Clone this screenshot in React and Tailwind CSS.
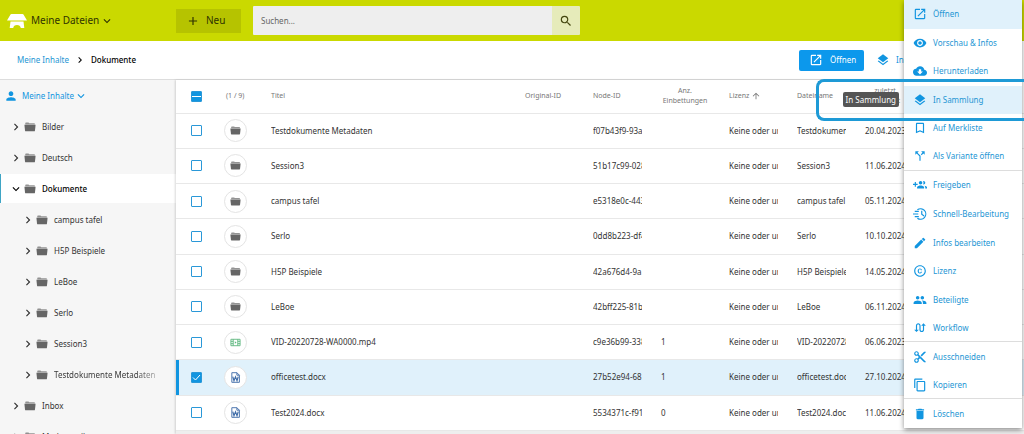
import React from 'react';
import {
  MdAdd,
  MdArrowUpward,
  MdBookmarkBorder,
  MdCallSplit,
  MdChevronRight,
  MdCloudDownload,
  MdContentCopy,
  MdContentCut,
  MdCopyright,
  MdDelete,
  MdEdit,
  MdExpandMore,
  MdLayers,
  MdOpenInNew,
  MdPeople,
  MdPerson,
  MdRemoveRedEye,
  MdSearch,
  MdSwapCalls,
} from 'react-icons/md';

const TREE = [
  { name: 'Bilder', level: 0 },
  { name: 'Deutsch', level: 0 },
  { name: 'Dokumente', level: 0, open: true },
  { name: 'campus tafel', level: 1 },
  { name: 'H5P Beispiele', level: 1 },
  { name: 'LeBoe', level: 1 },
  { name: 'Serlo', level: 1 },
  { name: 'Session3', level: 1 },
  { name: 'Testdokumente Metadaten', level: 1, fade: true },
  { name: 'Inbox', level: 0 },
  { name: 'Mathematik', level: 0 },
];

const ROWS = [
  { type: 'folder', title: 'Testdokumente Metadaten', node: 'f07b43f9-93a', date: '20.04.2023' },
  { type: 'folder', title: 'Session3', node: '51b17c99-028', date: '11.06.2024' },
  { type: 'folder', title: 'campus tafel', node: 'e5318e0c-443', date: '05.11.2024' },
  { type: 'folder', title: 'Serlo', node: '0dd8b223-df4', date: '10.10.2024' },
  { type: 'folder', title: 'H5P Beispiele', node: '42a676d4-9a', date: '14.05.2024' },
  { type: 'folder', title: 'LeBoe', node: '42bff225-81b', date: '06.11.2024' },
  { type: 'video', title: 'VID-20220728-WA0000.mp4', node: 'c9e36b99-338', count: 1, date: '06.06.2023' },
  { type: 'word', title: 'officetest.docx', node: '27b52e94-68', count: 1, date: '27.10.2024', selected: true },
  { type: 'word', title: 'Test2024.docx', node: '5534371c-f91', count: 0, date: '11.06.2024' },
];

// Group with the plus sign on the left
const ShareIcon = ({ className }) => (
  <svg viewBox="0 0 24 24" fill="currentColor" className={className}>
    <path d="M8 10H5V7H3v3H0v2h3v3h2v-3h3v-2zm10 1c1.66 0 2.99-1.34 2.99-3S19.66 5 18 5c-.32 0-.63.05-.91.14.57.81.9 1.79.9 2.86s-.34 2.04-.9 2.86c.28.09.59.14.91.14zm-5 0c1.66 0 2.99-1.34 2.99-3S14.66 5 13 5c-1.66 0-3 1.34-3 3s1.34 3 3 3zm6.62 2.16c.83.73 1.38 1.66 1.38 2.84v2h3v-2c0-1.54-2.37-2.49-4.38-2.84zM13 13c-2 0-6 1-6 3v2h12v-2c0-2-4-3-6-3z" />
  </svg>
);

// Clock with speed lines
const QuickEditIcon = ({ className }) => (
  <svg viewBox="0 0 24 24" fill="none" stroke="currentColor" strokeWidth="2" className={className}>
    <path d="M7.500 4.800A9 9 0 1 1 7.500 19.200" />
    <path d="M15 6.500v6l4 3M3 7.500h7M0 12h9M3 16.500h7" />
  </svg>
);

const FolderIcon = ({ className }) => (
  <svg viewBox="0 0 24 24" fill="#666" className={className}>
    <path d="M2.500 4.500c0-1 .6-1.500 1.500-1.500h5l1.500 1.500h10c.8 0 1.300.5 1.300 1.300V7H2.500z" opacity=".7" />
    <path d="M.8 7.500h22.400l-1.300 12c-.1.700-.6 1-1.300 1H3.400c-.7 0-1.200-.3-1.300-1z" />
  </svg>
);

const VideoIcon = ({ className }) => (
  <svg viewBox="0 0 24 24" fill="none" stroke="#5fb880" strokeWidth="2" className={className}>
    <path d="M2 5h20v14H2zM7 5v14M17 5v14M2 9.500h5M2 14.500h5M17 9.500h5M17 14.500h5" />
    <path d="M10.500 9.500v5l4-2.500z" fill="#5fb880" stroke="none" />
  </svg>
);

const WordIcon = ({ className }) => (
  <svg viewBox="0 0 24 24" fill="none" stroke="#3f6ca8" strokeWidth="2" className={className}>
    <path d="M4 1.500h11l5.500 5.500v15.500H4zM15 1.500V7h5.500" />
    <path d="M6 10l2.700 9L12 10.500l3.300 8.500L18 10" strokeWidth="2.600" />
  </svg>
);

const Logo = ({ className }) => (
  <svg viewBox="0 0 20 16" fill="#fff" className={className}>
    <path d="M4.500 1h11c.5 0 .8.200 1 .6L20 7.500H0l3.500-5.900c.2-.4.500-.6 1-.6z" />
    <path d="M3.500 8.500h13l.8 6.500h-3.500c-.3-2-1.600-3-3.800-3s-3.500 1-3.800 3H2.700z" />
  </svg>
);

const MENU = [
  { label: 'Öffnen', icon: MdOpenInNew, active: true },
  { label: 'Vorschau & Infos', icon: MdRemoveRedEye },
  { label: 'Herunterladen', icon: MdCloudDownload },
  { label: 'In Sammlung', icon: MdLayers, active: true },
  { label: 'Auf Merkliste', icon: MdBookmarkBorder },
  { label: 'Als Variante öffnen', icon: MdCallSplit, divider: true },
  { label: 'Freigeben', icon: ShareIcon },
  { label: 'Schnell-Bearbeitung', icon: QuickEditIcon },
  { label: 'Infos bearbeiten', icon: MdEdit },
  { label: 'Lizenz', icon: MdCopyright },
  { label: 'Beteiligte', icon: MdPeople },
  { label: 'Workflow', icon: MdSwapCalls, divider: true },
  { label: 'Ausschneiden', icon: MdContentCut },
  { label: 'Kopieren', icon: MdContentCopy, divider: true },
  { label: 'Löschen', icon: MdDelete },
];

const TYPE_ICONS = { folder: FolderIcon, video: VideoIcon, word: WordIcon };

const checkboxClass =
  'block size-[11px] appearance-none rounded-[1px] border border-[#2a98d8] bg-white checked:bg-[#1195e0]';

const TopBar = () => (
  <header className="flex h-[41px] items-center bg-[#cad900] pl-[7px]">
    <button className="flex w-[169px] items-center text-[10px] text-[#2f3300]">
      <Logo className="mr-1 h-4 w-5" />
      Meine Dateien
      <MdExpandMore className="ml-px size-3.5" />
    </button>
    <button className="flex h-6 w-[65px] items-center gap-1.5 bg-[#b6c300] pl-[10px] text-[10px] text-[#2f3300]">
      <MdAdd className="size-3.5" />
      Neu
    </button>
    <form className="ml-3 flex h-[29px] w-[327px]">
      <input
        type="text"
        aria-label="Suchen"
        placeholder="Suchen..."
        className="min-w-0 flex-1 rounded-l-[1px] bg-[#eee] px-2 text-[8px] outline-none placeholder:text-[#666]"
      />
      <button
        type="button"
        aria-label="Suche starten"
        className="flex w-7 items-center justify-center rounded-r-[1px] bg-[#e6ebba] text-[#44460f]"
      >
        <MdSearch className="size-3.5" />
      </button>
    </form>
  </header>
);

const ActionBar = () => (
  <div className="flex h-[39px] items-center border-b border-[#ddd] bg-white pl-[17px] text-[8px]">
    <nav className="flex flex-1 items-center gap-[5px]">
      <a href="#inhalte" className="text-[#1e96d4]">Meine Inhalte</a>
      <MdChevronRight className="size-3" />
      <span className="font-medium text-black">Dokumente</span>
    </nav>
    <button className="flex h-[21px] w-[65px] items-center gap-[7px] rounded-[2px] bg-[#0c98ec] pl-[10px] text-white">
      <MdOpenInNew className="size-3.5" />
      Öffnen
    </button>
    <button className="ml-3 flex w-[148px] items-center gap-1.5 text-[#1195e0]">
      <MdLayers className="size-3.5" />
      In Sammlung
    </button>
  </div>
);

const Sidebar = () => (
  <aside className="w-[176px] shrink-0 overflow-hidden bg-[#f6f6f6] text-[8px]">
    <button className="flex h-8 items-center pl-1 text-[#1195e0]">
      <MdPerson className="mr-1 size-3.5" />
      Meine Inhalte
      <MdExpandMore className="size-3.5" />
    </button>
    <ul className="flex flex-col gap-[2px]">
      {TREE.map((item) => (
        <li key={item.name}>
          <a
            href="#ordner"
            className={`flex h-[29px] items-center border-l ${item.level ? 'pl-5' : 'pl-2'} ${
              item.open ? 'border-[#3fa5c5] bg-white font-medium text-black' : 'border-transparent text-[#333]'
            }`}
          >
            {item.open ? <MdExpandMore className="size-3.5" /> : <MdChevronRight className="size-3.5" />}
            <FolderIcon className="mr-1.5 ml-px size-3" />
            <span className={item.fade ? 'bg-linear-to-r from-[#333] from-80% to-[#aaa] bg-clip-text text-transparent' : ''}>
              {item.name}
            </span>
          </a>
        </li>
      ))}
    </ul>
  </aside>
);

const Clipped = ({ children }) => <div className="w-[49px] overflow-hidden whitespace-nowrap">{children}</div>;

const FileTable = () => (
  <table className="h-[351px] w-full table-fixed border-collapse bg-white text-left text-[8px] text-[#333]">
    <colgroup>
      <col className="w-10" />
      <col className="w-[55px]" />
      <col />
      <col className="w-[68px]" />
      <col className="w-[68px]" />
      <col className="w-[68px]" />
      <col className="w-[68px]" />
      <col className="w-[68px]" />
      <col className="w-[159px]" />
    </colgroup>
    <thead>
      <tr className="h-[33px] border-b border-[#e8e8e8] text-[7px] leading-[10px] text-[#777]">
        <th className="pl-[15px]">
          <span className="relative block size-[11px]">
            <input type="checkbox" defaultChecked aria-label="Alle auswählen" className={checkboxClass} />
            <span className="pointer-events-none absolute inset-x-[1px] top-[5px] h-px bg-white" />
          </span>
        </th>
        <th className="pl-[10px] font-normal">(1 / 9)</th>
        <th className="font-normal">Titel</th>
        <th className="font-normal">Original-ID</th>
        <th className="font-normal">Node-ID</th>
        <th className="pr-5 text-center font-normal">Anz. Einbettungen</th>
        <th className="font-normal">
          <span className="flex items-center gap-[2px]">
            Lizenz <MdArrowUpward className="size-2.5" />
          </span>
        </th>
        <th className="font-normal">Dateiname</th>
        <th className="font-normal">
          <span className="block w-10 text-center">zuletzt geändert</span>
        </th>
      </tr>
    </thead>
    <tbody>
      {ROWS.map((row) => {
        const Icon = TYPE_ICONS[row.type];
        return (
          <tr key={row.title} className={`border-b border-[#e8e8e8] ${row.selected ? 'bg-[#e0f1fb]' : ''}`}>
            <td className={`pl-[15px] ${row.selected ? 'shadow-[inset_3px_0_0_#1195e0]' : ''}`}>
              <span className="relative block size-[11px]">
                <input type="checkbox" defaultChecked={row.selected} aria-label={row.title} className={checkboxClass} />
                {row.selected && (
                  <svg viewBox="0 0 11 11" className="pointer-events-none absolute inset-0 size-[11px]" fill="none" stroke="#fff">
                    <path d="M2 5.500l2.500 2.500L9 3" />
                  </svg>
                )}
              </span>
            </td>
            <td className="pl-2">
              <span className="flex size-[23px] items-center justify-center rounded-full border border-[#e4e4e4] bg-white">
                <Icon className="size-[11px]" />
              </span>
            </td>
            <td className="truncate">{row.title}</td>
            <td />
            <td><Clipped>{row.node}</Clipped></td>
            <td>{row.count}</td>
            <td><Clipped>Keine oder un</Clipped></td>
            <td><Clipped>{row.title}</Clipped></td>
            <td>{row.date}</td>
          </tr>
        );
      })}
    </tbody>
  </table>
);

const ContextMenu = () => (
  <ul className="absolute top-0 right-[2px] grid h-[428px] w-[118px] auto-rows-fr bg-white shadow-[0_2px_5px_rgba(0,0,0,0.45)]">
    {MENU.map(({ label, icon: Icon, active, divider }) => (
      <li key={label} className={`${active ? 'bg-[#e0f1fb]' : ''} ${divider ? 'border-b border-[#ddd]' : ''}`}>
        <button className="flex size-full items-center gap-[6px] pl-[9px] text-[8px] whitespace-nowrap text-[#1e96d4]">
          <Icon className="size-3.5 shrink-0 text-[#1195e0]" />
          {label}
        </button>
      </li>
    ))}
  </ul>
);

const App = () => (
  <div className="relative h-screen overflow-hidden bg-[#eee] font-['Noto_Sans',sans-serif]">
    <div className="flex h-full flex-col">
      <TopBar />
      <ActionBar />
      <div className="flex min-h-0 flex-1">
        <Sidebar />
        <main className="z-10 min-w-0 flex-1 shadow-[-1px_0_2px_rgba(0,0,0,0.15)]">
          <FileTable />
        </main>
      </div>
    </div>
    <div className="absolute inset-y-0 right-0 z-20">
      <ContextMenu />
      <div className="pointer-events-none absolute top-[79px] right-0 h-[42px] w-[208px] rounded-l-lg border-3 border-r-0 border-[#1e9ad6]" />
      <div
        role="tooltip"
        className="absolute top-[92px] right-[125px] rounded-[2px] bg-[#555] px-[3px] text-[8px] leading-[15px] whitespace-nowrap text-white"
      >
        In Sammlung
      </div>
    </div>
  </div>
);

export default App;
